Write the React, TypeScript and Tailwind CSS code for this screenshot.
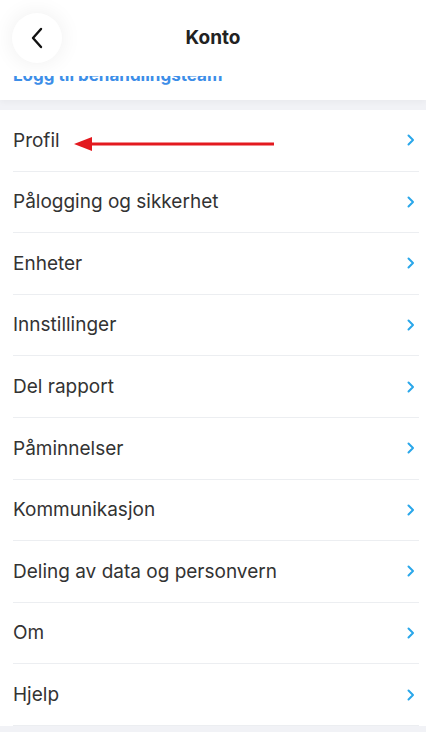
import React from 'react'

const items = [
  'Profil',
  'Pålogging og sikkerhet',
  'Enheter',
  'Innstillinger',
  'Del rapport',
  'Påminnelser',
  'Kommunikasjon',
  'Deling av data og personvern',
  'Om',
  'Hjelp',
]

const Chevron: React.FC = () => (
  <svg width="8" height="12" viewBox="0 0 8 12" fill="none">
    <path d="M1.5 1.5 L6 6 L1.5 10.5" stroke="#2aa7ea" strokeWidth="2" strokeLinecap="round" strokeLinejoin="round" />
  </svg>
)

// red annotation arrow pointing at "Profil"
const RedArrow: React.FC = () => (
  <svg width="202" height="16" viewBox="0 0 202 16" className="absolute left-[74px] top-[26px]">
    <polygon points="0,8 18,1 18,15" fill="#e3191f" />
    <rect x="16" y="6.5" width="184" height="3" fill="#e3191f" />
  </svg>
)

export default function App() {
  return (
    <div className="w-[426px] h-[732px] overflow-hidden bg-[#f1f2f6] font-['Inter',sans-serif] text-[#333]">
      {/* Header */}
      <div className="bg-white h-[100px] relative shadow-[0_2px_6px_rgba(0,0,0,0.04)]">
        <div className="flex items-center h-[76px] px-3">
          <button className="w-[50px] h-[50px] rounded-full bg-white flex items-center justify-center shadow-[0_0_22px_rgba(0,0,0,0.07)]">
            <svg width="16" height="24" viewBox="0 0 16 24" fill="none">
              <path d="M12 3 L4 12 L12 21" stroke="#111" strokeWidth="2.4" strokeLinecap="round" strokeLinejoin="round" />
            </svg>
          </button>
          <div className="flex-1 text-center font-bold text-[19px] text-[#222] pr-[50px]">Konto</div>
        </div>
        <div className="px-[13px] h-[9px] overflow-hidden">
          <div className="-mt-[10px] text-[17px] font-bold text-[#3d8ee8] leading-[19px] whitespace-nowrap">Logg til behandlingsteam</div>
        </div>
      </div>

      {/* List */}
      <div className="mt-[10px] bg-white">
        {items.map((item, i) => (
          <div key={item} className="pl-[13px] pr-[7px] relative">
            <div className="flex items-center h-[61.6px] border-b border-[#eceef1] pr-[4px]">
              <span className="text-[19px] text-[#333] pt-[1px]">{item}</span>
              <span className="ml-auto"><Chevron /></span>
            </div>
            {i === 0 && <RedArrow />}
          </div>
        ))}
      </div>
    </div>
  )
}
